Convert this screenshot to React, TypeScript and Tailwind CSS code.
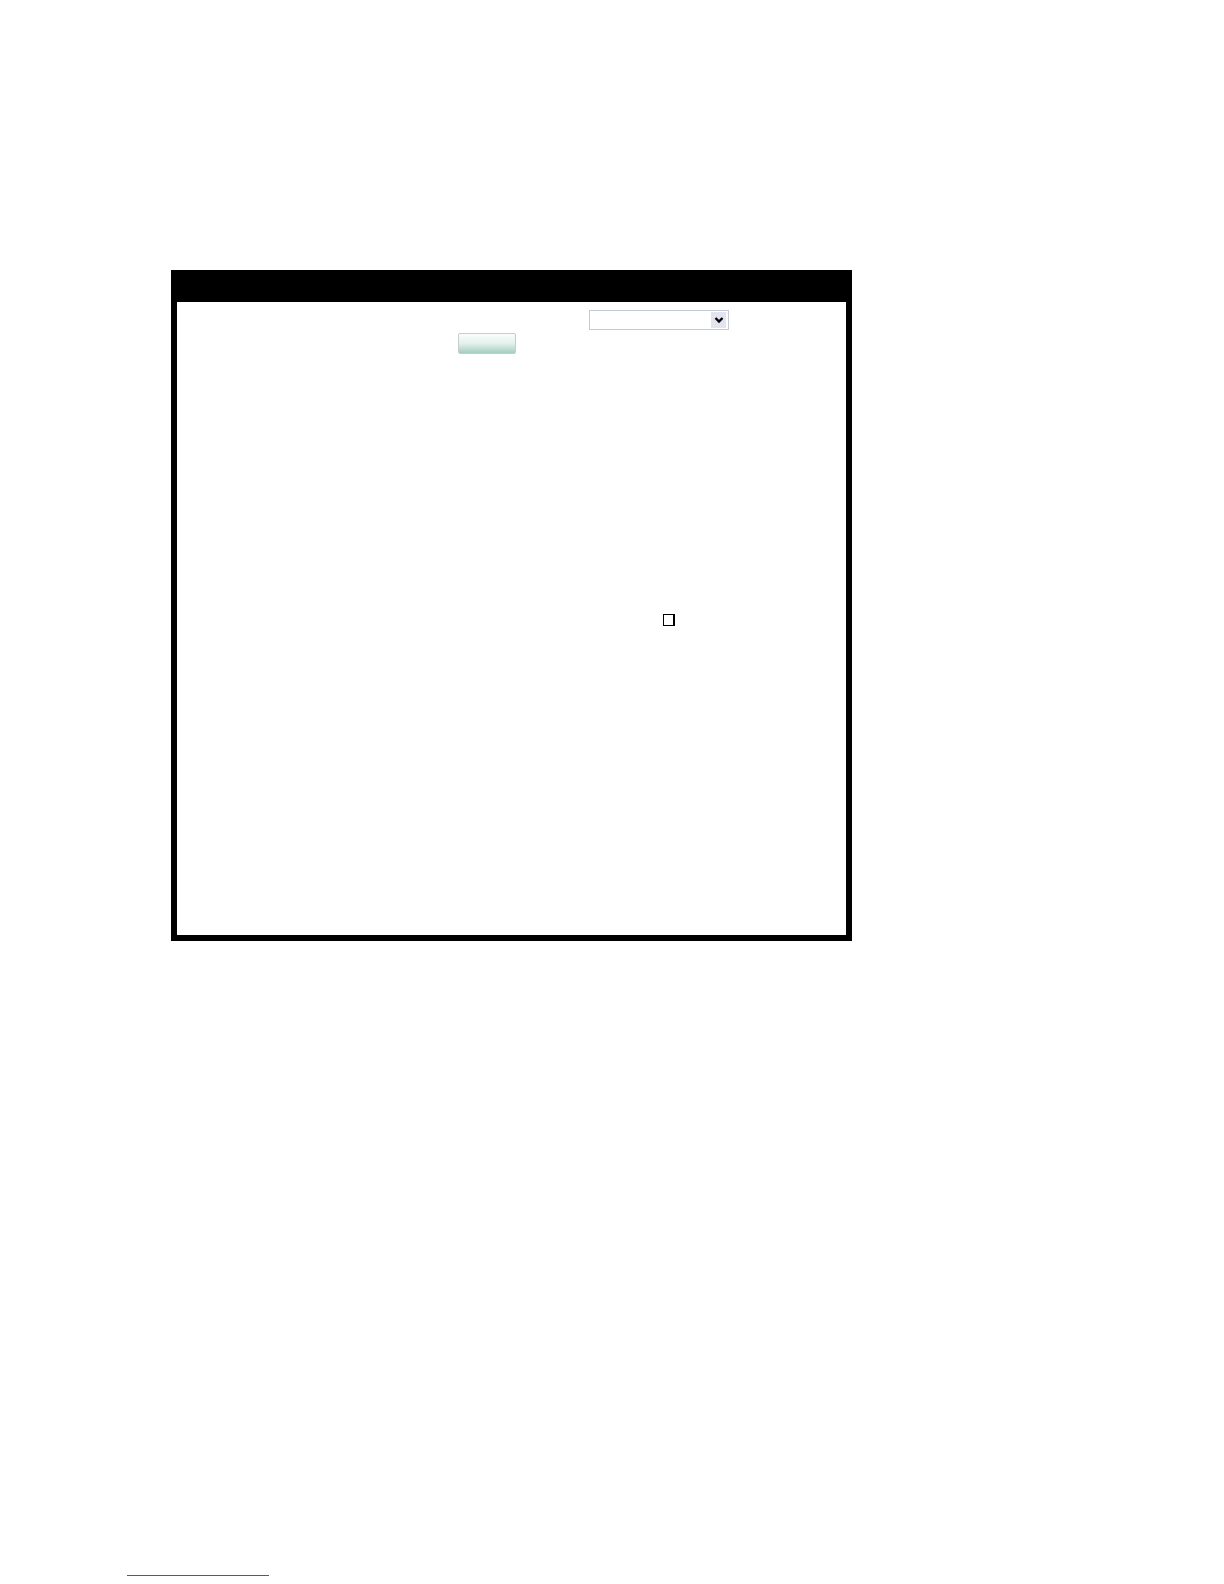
import React from 'react';

const SelectBox: React.FC = () => (
  <div className="flex h-[20px] w-[140px] items-center justify-end border border-[#c5cadb] bg-white pr-[2px]">
    <div className="flex h-[16px] w-[15px] items-center justify-center bg-[#e2e5f0]">
      <svg width="10" height="8" viewBox="0 0 10 8">
        <path d="M1.5 2 L5 5.5 L8.5 2" fill="none" stroke="#000" strokeWidth="2.4" />
      </svg>
    </div>
  </div>
);

const App: React.FC = () => {
  return (
    <div className="h-[1584px] w-[1224px] bg-white font-['Liberation_Sans',sans-serif]">
      <div className="pl-[171px] pt-[270px]">
        {/* main panel */}
        <div className="flex h-[671px] w-[681px] flex-col border-[6px] border-black bg-white">
          <div className="h-[26px] bg-black" />
          <div className="flex flex-col">
            <div className="pl-[412px] pt-[8px]">
              <SelectBox />
            </div>
            <div className="mt-[3px] pl-[281px]">
              <div className="h-[21px] w-[58px] rounded-[2px] border border-[#c4cecb] bg-gradient-to-b from-[#fbfdfc] via-[#e3f0ec] to-[#a4cdc1]" />
            </div>
            <div className="mt-[260px] pl-[486px]">
              <div className="h-[12px] w-[12px] border border-r-2 border-black bg-white" />
            </div>
          </div>
        </div>
      </div>
      <div className="ml-[127px] mt-[634px] w-[142px] border-b border-[#3557d4]" />
    </div>
  );
};

export default App;
